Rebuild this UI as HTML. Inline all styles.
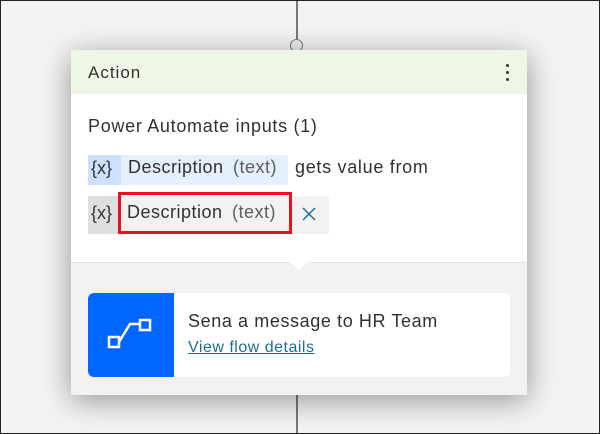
<!DOCTYPE html><html><head><style>
body{margin:0;width:600px;height:434px;overflow:hidden;font-family:"Segoe UI","Liberation Sans",sans-serif;}
.bg{position:absolute;left:0;top:0;width:598px;height:432px;border:1px solid #222;background:#f4f3f2;overflow:hidden}
.line{position:absolute;left:295px;width:2px;background:#777}
.circ{position:absolute;left:289px;top:38px;width:11px;height:11px;border:1.5px solid #777;border-radius:50%;background:#eee}
.card{position:absolute;left:70px;top:49px;width:456px;height:344px;background:#fff;box-shadow:0 6px 28px rgba(0,0,0,.4)}
.hd{height:44px;background:#eef7e6;font-size:17px;letter-spacing:1px;color:#323130;line-height:46px;padding-left:17px;position:relative}
.dots{position:absolute;right:18px;top:14px;width:3px}
.dots i{display:block;width:3px;height:3px;background:#333;border-radius:50%;margin-bottom:4px}
.t{position:absolute;font-size:18px;letter-spacing:0.7px;color:#323130;white-space:nowrap}
.low{position:absolute;left:0;top:212px;width:456px;height:132px;background:#f3f2f1;border-top:1px solid #e6e5e4}
.notch{position:absolute;left:219px;top:-1px;width:0;height:0;border-left:9px solid transparent;border-right:9px solid transparent;border-top:8px solid #fff}
.fc{position:absolute;left:17px;top:30px;width:422px;height:84px;background:#fff;border-radius:6px;overflow:hidden}
.blue{position:absolute;left:0;top:0;width:86px;height:84px;background:#0066ff}
</style></head><body><div class="bg">
<div class="line" style="top:0;height:38px"></div>
<div class="circ"></div>
<div class="line" style="top:392px;height:42px"></div>
<div class="card">
<div class="hd">Action<div class="dots"><i></i><i></i><i></i></div></div>
<div class="t" style="left:17px;top:66px">Power Automate inputs (1)</div>
<div style="position:absolute;left:17px;top:105px;width:33px;height:30px;background:#cce0ff"></div>
<div style="position:absolute;left:50px;top:105px;width:167px;height:30px;background:#e5f0ff"></div>
<div class="t" style="left:20px;top:108px;letter-spacing:0">{x}</div>
<div class="t" style="left:57px;top:107px;letter-spacing:0.5px">Description <span style="color:#605e5c;margin-left:4px">(text)</span></div>
<div class="t" style="left:224px;top:107px">gets value from</div>
<div style="position:absolute;left:17px;top:146px;width:241px;height:38px;background:#f3f2f1;border-radius:2px"></div>
<div style="position:absolute;left:17px;top:146px;width:31px;height:38px;background:#e1dfdd"></div>
<div class="t" style="left:20px;top:153px;letter-spacing:0">{x}</div>
<div style="position:absolute;left:47px;top:142px;width:168px;height:36px;border:3px solid #e81123"></div>
<div class="t" style="left:56px;top:152px;letter-spacing:0.5px">Description <span style="color:#605e5c;margin-left:4px">(text)</span></div>
<svg style="position:absolute;left:231px;top:157px" width="14" height="14"><path d="M1 1L13 13M13 1L1 13" stroke="#1a6f8f" stroke-width="1.5"/></svg>
<div class="low"><div class="notch"></div>
<div class="fc"><div class="blue"><svg width="86" height="84"><g fill="none" stroke="#fff" stroke-width="2.5"><rect x="21" y="44" width="10" height="10"/><rect x="52" y="27" width="10" height="10"/><path d="M31 49 L42 31 L52 31"/></g></svg></div>
<div class="t" style="left:100px;top:18px;font-size:18px;letter-spacing:0.6px">Sena a message to HR Team</div>
<div class="t" style="left:100px;top:46px;font-size:16px;letter-spacing:0.5px;color:#1a6f8f;text-decoration:underline">View flow details</div>
</div></div>
</div></div></body></html>
